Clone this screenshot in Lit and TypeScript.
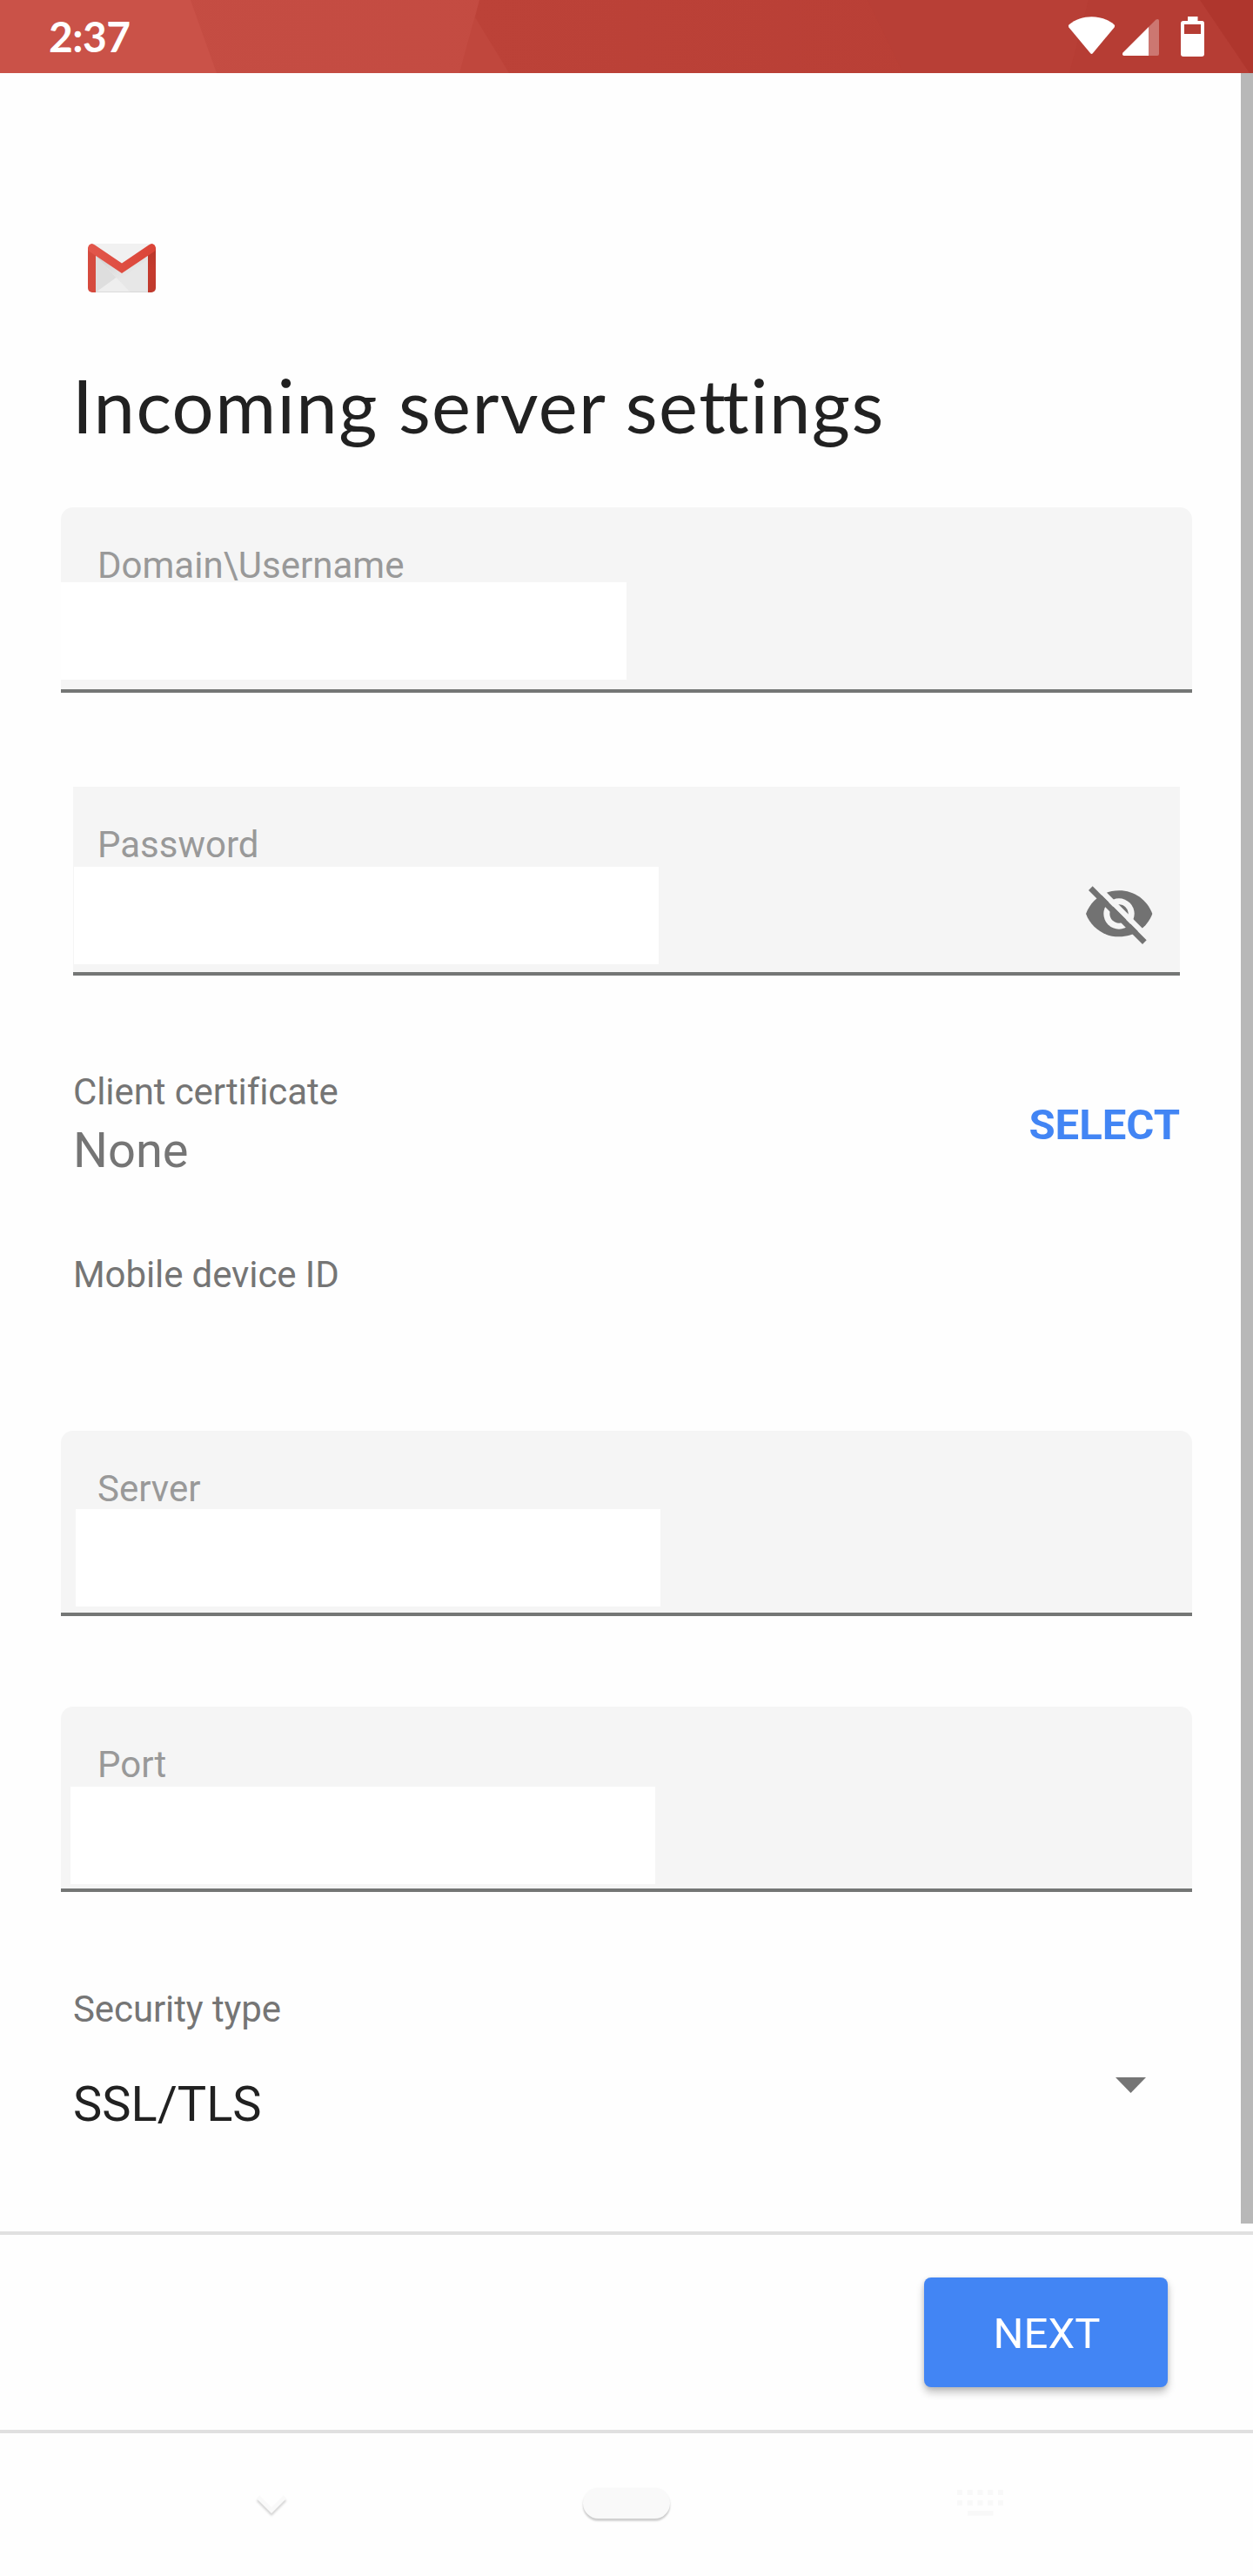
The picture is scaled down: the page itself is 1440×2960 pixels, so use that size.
import { LitElement, html, css, svg } from "lit";
import { customElement, property } from "lit/decorators.js";

@customElement("form-field")
class FormField extends LitElement {
  @property() label = "";

  static styles = css`
    :host {
      display: flex;
      flex-direction: column;
      box-sizing: border-box;
      height: 213px;
      padding-top: 49px;
      background: #f5f5f5;
      border-bottom: 4px solid #747675;
      border-radius: 14px 14px 0 0;
    }
    .label {
      padding-left: var(--label-left, 42px);
      font-size: 42px;
      line-height: 36px;
      color: #999;
    }
    .row {
      display: flex;
      justify-content: space-between;
    }
    .value {
      width: var(--value-width, 672px);
      height: 112px;
      margin: var(--value-top, 1px) 0 0 var(--value-left, 0);
      background: #fff;
    }
  `;

  render() {
    return html`
      <div class="label">${this.label}</div>
      <div class="row"><div class="value"></div><slot></slot></div>
    `;
  }
}

@customElement("app-root")
class AppRoot extends LitElement {
  static styles = css`
    :host {
      display: flex;
      flex-direction: column;
      width: 1440px;
      height: 2960px;
      overflow: hidden;
      background: #fefefe;
      font-family: Roboto, sans-serif;
      color: #212121;
    }
    svg { display: block; flex: none; }
    .status {
      display: grid;
      height: 84px;
      flex: none;
    }
    .status > * { grid-area: 1 / 1; }
    .status-row {
      display: flex;
      justify-content: space-between;
      align-items: center;
      z-index: 1;
      padding-left: 56px;
    }
    .clock {
      font: 700 48px/84px Lato, sans-serif;
      letter-spacing: -0.6px;
      color: #fff;
    }
    .main {
      display: flex;
      justify-content: space-between;
      height: 2480px;
      flex: none;
    }
    .content {
      width: 1300px;
      padding-left: 70px;
      display: flex;
      flex-direction: column;
    }
    .scrollbar { width: 14px; height: 2471px; background: #b8b8b8; }
    .logo { margin: 196px 0 0 31px; }
    .title {
      margin: 79px 0 0 13px;
      font: 400 85px/100px Lato, sans-serif;
      white-space: nowrap;
      height: 101px;
      letter-spacing: 1.4px;
    }
    .joined { letter-spacing: -3.5px; }
    .username { margin-top: 67px; }
    .password {
      margin: 108px 14px 0;
      height: 217px;
      border-radius: 0;
      --label-left: 28px;
      --value-top: 7px;
      --value-left: 1px;
    }
    .password .eye { margin: 17px 20px 0 0; }
    .server { --value-top: 5px; --value-left: 17px; }
    .port { margin-top: 104px; --value-top: 7px; --value-left: 11px; }
    .cert {
      display: flex;
      justify-content: space-between;
      align-items: center;
      height: 140px;
      margin: 102px 14px 0;
    }
    .caption { font-size: 42px; line-height: 50px; color: #757575; letter-spacing: -0.1px; }
    .none { font-size: 56px; line-height: 68px; color: #757575; margin-top: 8px; }
    .select { font-size: 49px; font-weight: 700; line-height: 60px; color: #4285f4; margin-top: -1px; }
    .device { margin: 77px 14px 154px; }
    .security { margin: 110px 14px 0; }
    .choice {
      display: flex;
      justify-content: space-between;
      padding-right: 39px;
      margin-top: 50px;
      font-size: 56px;
      line-height: 68px;
    }
    .arrow { margin-top: 3px; }
    .actions {
      display: flex;
      justify-content: flex-end;
      align-items: center;
      height: 224px;
      flex: none;
      border-top: 4px solid #e0e0e0;
      border-bottom: 4px solid #e0e0e0;
      padding-right: 98px;
    }
    .next {
      width: 280px;
      height: 126px;
      border: 0;
      padding: 3px 0 0 2px;
      border-radius: 8px;
      background: #4285f4;
      color: #fff;
      font: 400 49px/60px Roboto, sans-serif;
      box-shadow: 0 6px 10px rgba(0, 0, 0, 0.24), 0 1px 5px rgba(0, 0, 0, 0.1);
    }
    .nav {
      display: flex;
      height: 164px;
      padding: 55px 0 0 285px;
      box-sizing: border-box;
    }
    .home {
      width: 100px;
      height: 35px;
      margin: 8px 0 0 331px;
      border-radius: 18px;
      background: #f9f9f9;
      box-shadow: 0 3px 2px rgba(0, 0, 0, 0.16), 0 1px 3px rgba(0, 0, 0, 0.07);
    }
    .keys { margin: 10px 0 0 330px; }
    .drop { filter: drop-shadow(0 3px 1px rgba(0, 0, 0, 0.16)); }
  `;

  private statusBackground() {
    return html`<svg width="1440" height="84" viewBox="0 0 1440 84">
      <defs>
        <linearGradient id="bar"><stop offset="0" stop-color="#c54d43"/><stop offset="1" stop-color="#c24940"/></linearGradient>
        <linearGradient id="deep"><stop offset="0" stop-color="#bc4238"/><stop offset="1" stop-color="#b73d34"/></linearGradient>
      </defs>
      <rect width="1440" height="84" fill="url(#bar)"/>
      <path d="M0 0H219L249 84H0Z" fill="#ca5248"/>
      <path d="M551 0H1440V84H528Z" fill="#c0473d"/>
      <path d="M551 0H1440V84H585L546 20Z" fill="url(#deep)"/>
      <path d="M997 0H1440V84H1038Z" fill="#b83f36"/>
      <path d="M1251 0H1440V84H1229Z" fill="#b63d34"/>
      <path d="M1379 0H1440V84H1436Z" fill="#af362d"/>
    </svg>`;
  }

  private statusIcons() {
    return html`<svg width="220" height="84" viewBox="1220 0 220 84" fill="#fff">
      <path d="M1228.6 28.2C1243 16.2 1266 16.2 1280.4 28.2Q1281.7 29.6 1280.6 31.4L1256 61Q1254.5 62.8 1253 61L1228.4 31.4Q1227.3 29.6 1228.6 28.2Z"/>
      <path d="M1320 31V64H1291.5Q1289 63 1290.5 60.5Z"/>
      <path d="M1320 31L1328.5 22.5Q1332 21 1332 24V62Q1332 64 1330 64H1320Z" fill-opacity=".3"/>
      <path fill-rule="evenodd" d="M1365 19H1376.5V24H1381.5Q1384 24 1384 27V62Q1384 65 1381 65H1360Q1357 65 1357 62V27Q1357 24 1360 24H1365ZM1361 28V39H1380V28Z"/>
    </svg>`;
  }

  private gmailLogo() {
    return html`<svg class="logo" width="78" height="56" viewBox="0 0 78 56">
      <defs>
        <linearGradient id="fold" x2="1"><stop offset="0" stop-color="#e2574c"/><stop offset="1" stop-color="#db4437"/></linearGradient>
        <linearGradient id="left" x2="0" y2="1"><stop offset="0" stop-color="#d54b3f"/><stop offset="1" stop-color="#d64a3d"/></linearGradient>
        <linearGradient id="right" x2="0" y2="1"><stop offset="0" stop-color="#b8382b"/><stop offset=".5" stop-color="#c53a2d"/><stop offset="1" stop-color="#bf3a2d"/></linearGradient>
        <linearGradient id="shade" x2="1" y2="1"><stop offset="0" stop-color="#cdcdcd"/><stop offset=".6" stop-color="#e4e4e4"/><stop offset="1" stop-color="#ececec"/></linearGradient>
        <clipPath id="body"><rect width="78" height="56" rx="5"/></clipPath>
      </defs>
      <g clip-path="url(#body)">
        <path d="M4 0H74V56H4Z" fill="#e7e7e7"/>
        <path d="M8 13L32.500 39L9 56Z" fill="#dedede"/>
        <path d="M8 13L39 34L69 14V18L36 42Z" fill="url(#shade)"/>
        <path d="M9 56L32.500 39L49 56Z" fill="#eee"/>
        <path d="M5 0H73L39 23Z" fill="#f1f1f1"/>
        <path d="M9 55.300H69V56H9Z" fill="#d4d4d4"/>
        <path d="M0 4L9 13V56H0Z" fill="url(#left)"/>
        <path d="M78 4L69 13V56H78Z" fill="url(#right)"/>
        <path d="M0 5Q0 0 4.500 0Q6 0 8 1.500L39 22.500L70 1.500Q72 0 73.500 0Q78 0 78 5Q78 8 75.500 9.500L39 34L2.500 9.500Q0 8 0 5Z" fill="url(#fold)"/>
      </g>
    </svg>`;
  }

  private eyeOff() {
    return html`<svg class="eye" width="100" height="90" viewBox="0 0 300 270">
      <path d="M36 132C54 84 98 52 150.500 52S247 84 265 132C247 180 203 211 150.500 211S54 180 36 132Z" fill="#727272"/>
      <circle cx="150" cy="132" r="53" fill="#f5f5f5"/>
      <circle cx="150" cy="132" r="32" fill="#727272"/>
      <path d="M60 38L75 26L258 209L245 222Z" fill="#f5f5f5"/>
      <path d="M59 37L245 223L231 237L45 51Z" fill="#727272"/>
    </svg>`;
  }

  private keyboard() {
    const rows = [0, 12];
    const columns = [0, 11.75, 23.5, 35.25, 47];
    return html`<svg class="keys" width="54" height="30" viewBox="0 0 54 30" fill="#f8f8f8">
      ${rows.map((y) => columns.map((x) => svg`<rect x=${x} y=${y} width="6" height="6"/>`))}
      <rect x="12" y="24" width="29.500" height="5.700"/>
    </svg>`;
  }

  render() {
    return html`
      <div class="status">
        ${this.statusBackground()}
        <div class="status-row"><div class="clock">2:37</div>${this.statusIcons()}</div>
      </div>
      <div class="main">
        <div class="content">
          ${this.gmailLogo()}
          <div class="title">Incoming server se<span class="joined">t</span>tings</div>
          <form-field class="username" label="Domain\\Username" style="--value-width:650px"></form-field>
          <form-field class="password" label="Password">${this.eyeOff()}</form-field>
          <div class="cert">
            <div>
              <div class="caption">Client certificate</div>
              <div class="none">None</div>
            </div>
            <div class="select">SELECT</div>
          </div>
          <div class="caption device">Mobile device ID</div>
          <form-field class="server" label="Server"></form-field>
          <form-field class="port" label="Port"></form-field>
          <div class="security">
            <div class="caption">Security type</div>
            <div class="choice">
              <span>SSL/TLS</span>
              <svg class="arrow" width="35" height="18" viewBox="0 0 35 18"><path d="M0 0H35L17.500 18Z" fill="#757575"/></svg>
            </div>
          </div>
        </div>
        <div class="scrollbar"></div>
      </div>
      <div class="actions"><button class="next">NEXT</button></div>
      <div class="nav">
        <svg class="drop" width="54" height="54" viewBox="0 0 54 54" fill="none">
          <path d="M11.500 18L27 33.500L42.500 18" stroke="#f9f9f9" stroke-width="5"/>
        </svg>
        <div class="home"></div>
        ${this.keyboard()}
      </div>
    `;
  }
}
